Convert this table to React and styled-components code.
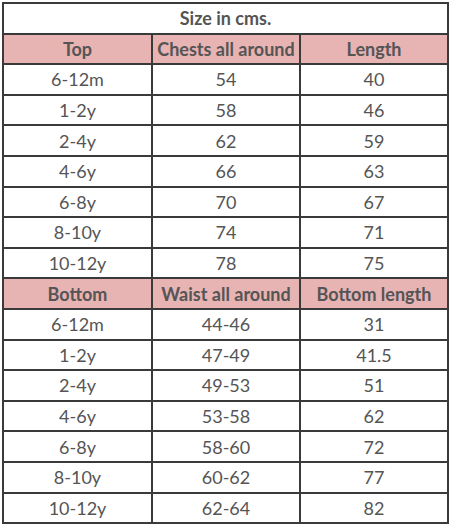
import React from "react";
import styled, { createGlobalStyle } from "styled-components";

const Global = createGlobalStyle`
  html, body { margin: 0; padding: 0; background: #fff; }
  body { font-family: Lato, "Open Sans", sans-serif; }
`;

const Page = styled.div`
  padding: 2px 0 0 2px;
  width: 449px;
  height: 530px;
  box-sizing: border-box;
`;

const Table = styled.table`
  border-collapse: collapse;
  width: 445px;
  table-layout: fixed;
  color: #555;
  font-size: 18px;
`;

const Row = styled.tr`
  height: 30.6px;
  background: ${(p) => (p.$head ? "#e8b3b3" : "#fff")};
`;

const Cell = styled.td`
  border: 2px solid #3a3a3a;
  text-align: center;
  vertical-align: middle;
  padding: 0;
  font-weight: ${(p) => (p.$bold ? 700 : 400)};
  line-height: 1;
  white-space: nowrap;
`;

const top = [
  ["6-12m", "54", "40"],
  ["1-2y", "58", "46"],
  ["2-4y", "62", "59"],
  ["4-6y", "66", "63"],
  ["6-8y", "70", "67"],
  ["8-10y", "74", "71"],
  ["10-12y", "78", "75"],
];

const bottom = [
  ["6-12m", "44-46", "31"],
  ["1-2y", "47-49", "41.5"],
  ["2-4y", "49-53", "51"],
  ["4-6y", "53-58", "62"],
  ["6-8y", "58-60", "72"],
  ["8-10y", "60-62", "77"],
  ["10-12y", "62-64", "82"],
];

function Section({ head, rows }) {
  return (
    <>
      <Row $head>
        {head.map((h) => (
          <Cell key={h} $bold>{h}</Cell>
        ))}
      </Row>
      {rows.map((r) => (
        <Row key={r[0]}>
          {r.map((c, i) => (
            <Cell key={i}>{c}</Cell>
          ))}
        </Row>
      ))}
    </>
  );
}

export default function App() {
  return (
    <Page>
      <Global />
      <Table>
        <colgroup>
          <col style={{ width: "149px" }} />
          <col style={{ width: "148px" }} />
          <col style={{ width: "148px" }} />
        </colgroup>
        <tbody>
          <Row>
            <Cell colSpan={3} $bold>Size in cms.</Cell>
          </Row>
          <Section head={["Top", "Chests all around", "Length"]} rows={top} />
          <Section head={["Bottom", "Waist all around", "Bottom length"]} rows={bottom} />
        </tbody>
      </Table>
    </Page>
  );
}
